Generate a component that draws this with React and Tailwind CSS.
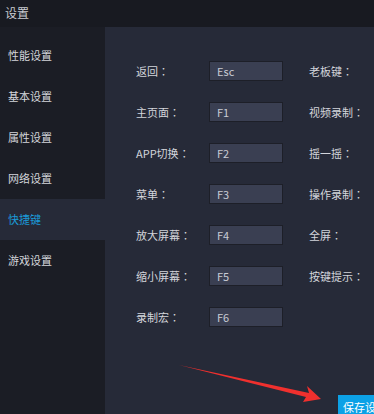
import { useState } from 'react'

const menu = ['性能设置', '基本设置', '属性设置', '网络设置', '快捷键', '游戏设置']

// left column: label + key, right column: label only (its box runs off the edge)
const rows = [
  ['返回', 'Esc', '老板键'],
  ['主页面', 'F1', '视频录制'],
  ['APP切换', 'F2', '摇一摇'],
  ['菜单', 'F3', '操作录制'],
  ['放大屏幕', 'F4', '全屏'],
  ['缩小屏幕', 'F5', '按键提示'],
  ['录制宏', 'F6', null],
]

// full-width colon, centred in its cell like the original UI font
function Label({ text }) {
  return (
    <>
      {text}
      <span style={{ fontFamily: '"Noto Sans CJK TC", sans-serif' }}>：</span>
    </>
  )
}

export default function App() {
  const [active, setActive] = useState(4)

  return (
    <div
      className="relative w-[374px] h-[414px] overflow-hidden bg-[#1b1d25] text-[#d3d5db] text-[11px]"
      style={{ fontFamily: '"Noto Sans CJK SC", "Noto Sans", sans-serif' }}
    >
      {/* title bar */}
      <div className="h-[27px] bg-[#181a21] flex items-center pl-[5px] pb-[2px] text-[12px] text-[#c9cbd2]">
        设置
      </div>

      <div className="flex h-[387px]">
        {/* sidebar */}
        <div className="w-[105px] shrink-0 pt-[8px] bg-[#1b1d25]">
          {menu.map((m, i) => (
            <div
              key={m}
              onClick={() => setActive(i)}
              className={
                'h-[41px] flex items-center pl-[8px] cursor-pointer ' +
                (i === active ? 'bg-[#262a38] text-[#1b9ad8]' : 'text-[#d3d5db]')
              }
            >
              {m}
            </div>
          ))}
        </div>

        {/* content panel */}
        <div className="flex-1 bg-[#262a38] overflow-hidden">
          <div className="w-[400px] pl-[31px] pt-[34px] flex flex-col gap-[21px]">
            {rows.map(([label, key, right]) => (
              <div key={label} className="flex items-center h-[20px]">
                <div className="w-[73px] shrink-0 whitespace-nowrap"><Label text={label} /></div>
                <div className="w-[74px] h-[20px] shrink-0 flex items-center pl-[7px] bg-[#3a3f52] border border-[#1d1f28] text-[#c9ccd5]">
                  {key}
                </div>
                {right && (
                  <div className="ml-[26px] w-[73px] shrink-0 whitespace-nowrap"><Label text={right} /></div>
                )}
              </div>
            ))}
          </div>

          <div className="ml-[233px] mt-[68px] w-[90px] h-[24px] flex items-center pl-[5px] bg-[#0ca1e6] text-white text-[11px] whitespace-nowrap">
            保存设置
          </div>
        </div>
      </div>

      {/* red annotation arrow */}
      <svg className="absolute left-0 top-0 pointer-events-none" width="374" height="414">
        <polygon points="179,365 309,393 307,386 321,399 303,402 306,397" fill="#f0302e" />
      </svg>
    </div>
  )
}
